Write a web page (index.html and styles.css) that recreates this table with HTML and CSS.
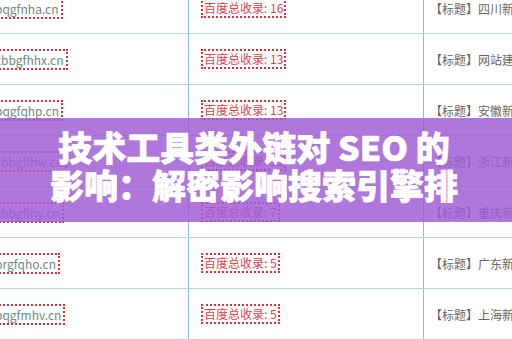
FILE: index.html
```html
<!DOCTYPE html>
<html lang="zh-CN">
<head>
<meta charset="utf-8">
<title>技术工具类外链对 SEO 的影响</title>
<link rel="stylesheet" href="styles.css">
</head>
<body>
<div class="page">
  <div class="list">
    <div class="row">
      <div class="c1"><span class="dom">bqgfnha.cn</span></div>
      <div class="c2"><span class="cnt">百度总收录: 16</span></div>
      <div class="c3">【标题】四川新闻网站建设</div>
    </div>
    <div class="row">
      <div class="c1"><span class="dom">xbbgfhhx.cn</span></div>
      <div class="c2"><span class="cnt">百度总收录: 13</span></div>
      <div class="c3">【标题】网站建设优化</div>
    </div>
    <div class="row">
      <div class="c1"><span class="dom">bqgfqhp.cn</span></div>
      <div class="c2"><span class="cnt">百度总收录: 13</span></div>
      <div class="c3">【标题】安徽新闻网站</div>
    </div>
    <div class="row">
      <div class="c1"><span class="dom">xbbgflhw.cn</span></div>
      <div class="c2"><span class="cnt">百度总收录: 11</span></div>
      <div class="c3">【标题】浙江新闻网站</div>
    </div>
    <div class="row">
      <div class="c1"><span class="dom">xbbgflhy.cn</span></div>
      <div class="c2"><span class="cnt">百度总收录: 7</span></div>
      <div class="c3">【标题】重庆新闻网站</div>
    </div>
    <div class="row">
      <div class="c1"><span class="dom">brgfqho.cn</span></div>
      <div class="c2"><span class="cnt">百度总收录: 5</span></div>
      <div class="c3">【标题】广东新闻网站</div>
    </div>
    <div class="row">
      <div class="c1"><span class="dom">bqgfmhv.cn</span></div>
      <div class="c2"><span class="cnt">百度总收录: 5</span></div>
      <div class="c3">【标题】上海新闻网站</div>
    </div>
  </div>
  <div class="banner">
    <h1 class="title">技术工具类外链对 SEO 的影响：解密影响搜索引擎排名的关键因素</h1>
  </div>
</div>
</body>
</html>
```

FILE: styles.css
```css
html, body {
  margin: 0;
  padding: 0;
  background: #ffffff;
}

body {
  width: 512px;
  height: 340px;
  overflow: hidden;
  font-family: "Noto Sans CJK SC", "Noto Sans", sans-serif;
}

.page {
  position: relative;
  width: 512px;
  height: 340px;
  overflow: hidden;
}

.list {
  display: flex;
  flex-direction: column;
  margin-top: -17px;
}

.row {
  display: flex;
  height: 51px;
  box-sizing: border-box;
  border-bottom: 1px solid #b9d3ea;
  flex-shrink: 0;
}

.c1 {
  width: 189px;
  box-sizing: border-box;
  border-right: 1px solid #8fb9df;
  display: flex;
  align-items: center;
  flex-shrink: 0;
}

.c2 {
  width: 235px;
  box-sizing: border-box;
  border-right: 1px solid #8fb9df;
  display: flex;
  align-items: center;
  padding-left: 12px;
  flex-shrink: 0;
}

.c3 {
  flex: 1;
  display: flex;
  align-items: center;
  padding-left: 6px;
  white-space: nowrap;
  overflow: hidden;
  font-size: 12px;
  color: #666666;
}

.dom {
  margin-left: -8px;
  border: 2px dotted #d8343a;
  padding: 1px 2px 1px 1px;
  font-size: 12px;
  line-height: 15px;
  color: #6f8a7f;
  white-space: nowrap;
}

.cnt {
  border: 2px dotted #d8343a;
  padding: 0 1px;
  font-size: 12px;
  line-height: 16px;
  color: #e0424a;
  white-space: nowrap;
}

.banner {
  position: absolute;
  left: 0;
  right: 0;
  top: 118px;
  height: 104px;
  background: rgba(160, 92, 212, 0.84);
  display: flex;
  align-items: center;
  justify-content: center;
}

.title {
  margin: -8px 0 0 -4px;
  width: 414px;
  max-height: 76px;
  font-size: 34px;
  line-height: 38px;
  font-weight: 900;
  color: #ffffff;
  -webkit-text-stroke: 0.7px #ffffff;
  text-align: center;
  overflow: hidden;
}
```
